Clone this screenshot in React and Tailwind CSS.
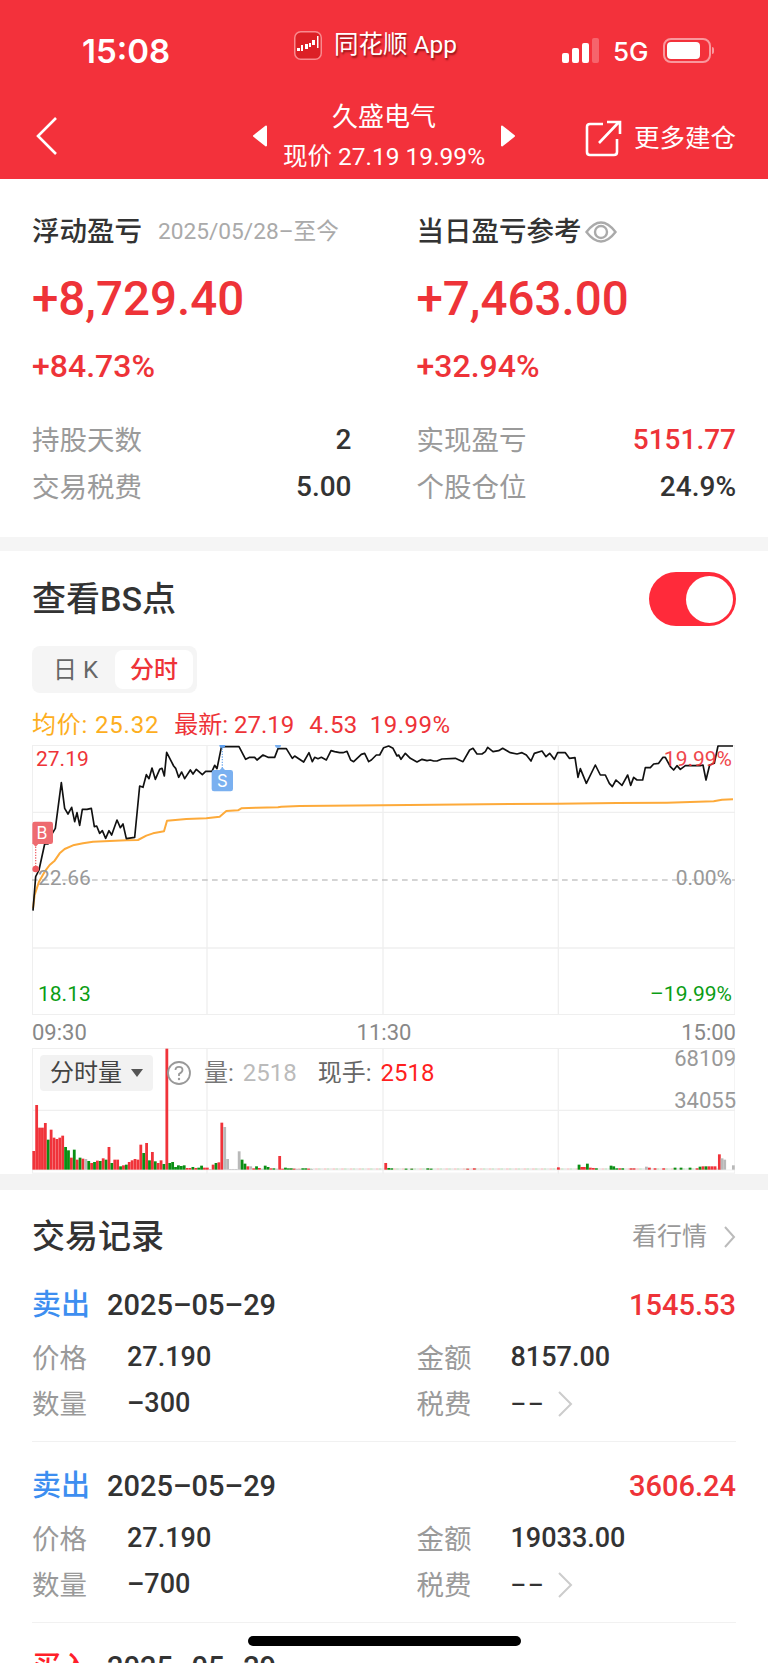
import React from 'react';

const RED = 'text-[#ee3338]';

const blackLine = '100,632 108,530 118,510 135,432 145,432 158,400 167,385 185,248 195,325 205,342 216,322 225,365 232,338 240,376 248,328 262,328 275,325 284,380 291,378 300,400 308,392 318,415 328,392 336,405 352,360 362,383 370,372 380,416 405,412 420,258 430,262 440,224 448,236 457,204 467,238 480,208 487,205 494,228 501,157 522,198 528,205 537,232 546,216 555,236 572,210 580,222 590,208 608,224 618,214 637,214 645,196 652,206 665,142 672,140 718,140 738,178 750,172 765,172 772,180 790,165 805,172 825,172 835,146 860,146 878,175 885,168 912,186 928,158 938,185 945,172 955,176 965,172 980,180 994,152 1005,155 1020,158 1030,158 1042,154 1053,180 1062,185 1085,163 1095,160 1107,185 1115,180 1130,165 1140,165 1152,143 1167,138 1180,145 1192,168 1197,165 1204,178 1217,160 1232,175 1252,186 1267,178 1282,182 1292,180 1302,183 1312,183 1327,177 1367,175 1390,185 1410,150 1420,145 1432,162 1447,162 1457,155 1464,142 1480,155 1497,152 1509,145 1532,158 1552,162 1567,158 1580,165 1594,183 1604,160 1627,153 1639,170 1650,160 1664,178 1674,158 1697,158 1709,175 1726,173 1735,232 1742,206 1760,250 1787,195 1802,225 1817,225 1829,250 1838,260 1849,240 1867,256 1884,225 1893,256 1902,232 1912,240 1929,240 1937,203 1952,203 1962,192 1977,190 1990,172 1997,172 2012,200 2022,210 2032,197 2042,208 2057,197 2102,197 2110,195 2119,240 2130,195 2144,190 2155,138 2200,138';

const goldLine = '100,625 105,585 118,545 135,515 150,495 165,482 180,460 195,447 220,436 250,430 280,425 330,423 380,421 415,420 440,407 460,400 493,394 502,362 560,357 620,355 660,350 680,333 715,331 725,325 770,323 835,322 845,320 900,318 1152,316 1452,313 1672,311 1852,309 2002,308 2142,304 2167,299 2200,298';

// r red, g green, n grey; value is the bar's top in the chart's units
const leftBars = 'r362 r224 r292 r292 r278 g328 r298 r322 r326 r322 r316 g350 g360 r382 g358 r388 g382 r385 n386 g392 r398 g395 r391 g392 r384 g388 r350 g398 r388 r388 g408 r405 g403 r395 r390 r386 r388 r343 g368 r338 g390 r365 g393 r398 r390 g401 r55 g398 g395 g410 g405 g407 g405 r413 r413 g410 r413 g412 g406 r412 r412 n416 r403 g398 r396 r277 n290 n386 n416 n416 n416 n363 g388 g400 r408 n408 r414 g408 r413 n415 g406 g410 r414 g414 n415 r377 r415 g412 g414 g414 r415 n416 n416 g414 g414 r415 n416'.split(' ');

const rightBars = [
  [1154, 'r', 398], [1163, 'g', 413], [1172, 'g', 414], [1215, 'g', 415], [1232, 'g', 415], [1280, 'g', 414], [1290, 'g', 415], [1400, 'r', 415], [1420, 'r', 414],
  [1672, 'r', 411], [1734, 'g', 403], [1742, 'r', 410], [1750, 'r', 410], [1759, 'g', 400], [1768, 'r', 412], [1777, 'r', 413], [1786, 'g', 414],
  [1830, 'g', 406], [1838, 'g', 408], [1847, 'g', 414], [1856, 'r', 414], [1865, 'g', 414], [1890, 'r', 414], [1899, 'r', 414], [1936, 'n', 409], [1945, 'r', 412], [1962, 'r', 414],
  [1988, 'r', 414], [2022, 'g', 412], [2040, 'g', 412], [2067, 'g', 412], [2088, 'r', 414], [2097, 'g', 409], [2106, 'r', 408], [2115, 'g', 408], [2124, 'r', 408], [2133, 'r', 408], [2142, 'r', 408], [2155, 'r', 372], [2163, 'n', 384], [2171, 'n', 388], [2197, 'n', 405],
];

const barFill = { r: '#f0333a', g: '#0a8f14', n: '#b9b9b9' };
const faintFill = ['#f7c4c6', '#c4e4c6', '#e4e4e4'];

function PriceChart() {
  return (
    <svg width="703.33" height="270" viewBox="97 135 2110 810" className="block">
      <rect x="98.5" y="136.5" width="2107" height="807" fill="none" stroke="#efefef" strokeWidth="3" />
      <path d="M97 337H2207M97 744H2207M622 135V945M1150 135V945M1676 135V945" stroke="#efefef" strokeWidth="4" fill="none" />
      <path d="M97 540H2207" stroke="#aaaaaa" strokeWidth="3.5" strokeDasharray="17 13" fill="none" />
      <polyline points={goldLine} fill="none" stroke="#fdaa3a" strokeWidth="6" strokeLinejoin="round" />
      <polyline points={blackLine} fill="none" stroke="#111" strokeWidth="5" strokeLinejoin="round" />
      <path d="M108 432V500" stroke="#ee6b70" strokeWidth="4" strokeDasharray="4 4" />
      <circle cx="108" cy="507" r="10" fill="#ee5a60" />
      <path d="M105 365H153Q160 365 160 372V425Q160 432 153 432H116L108 440L100 432H98V372Q98 365 105 365Z" fill="#ee6b70" />
      <text x="127" y="418" fontSize="50" fill="#fff" textAnchor="middle" fontFamily="Inter, sans-serif">B</text>
      <path d="M668 145V205" stroke="#7ab0f0" strokeWidth="4" strokeDasharray="4 4" />
      <circle cx="668" cy="135" r="9" fill="#5e9fee" />
      <circle cx="835" cy="135" r="9" fill="#7ab0f0" />
      <path d="M643 210H660L668 202L676 210H693Q700 210 700 217V267Q700 274 693 274H643Q636 274 636 267V217Q636 210 643 210Z" fill="#7ab0f0" />
      <text x="668" y="260" fontSize="50" fill="#fff" textAnchor="middle" fontFamily="Inter, sans-serif">S</text>
    </svg>
  );
}

function VolumeChart() {
  return (
    <svg width="703.33" height="125.67" viewBox="97 53 2110 377" className="block">
      <rect x="98.5" y="54.5" width="2107" height="374" fill="none" stroke="#efefef" strokeWidth="3" />
      <path d="M97 240H2207M622 53V430M1150 53V430M1676 53V430" stroke="#efefef" strokeWidth="4" fill="none" />
      <path d="M97 419H2207" stroke="#e8e8e8" strokeWidth="2" fill="none" />
      {Array.from({ length: 150 }, (_, i) => (
        <rect key={i} x={868 + i * 8.68} y="414" width="8.4" height="4" fill={faintFill[i % 3]} />
      ))}
      {leftBars.map((b, i) => {
        const top = Number(b.slice(1));
        return <rect key={i} x={98 + i * 8.68} y={top} width="8.4" height={418 - top} fill={barFill[b[0]]} />;
      })}
      {rightBars.map(([x, c, top]) => (
        <rect key={x} x={x} y={top} width="8.4" height={418 - top} fill={barFill[c]} />
      ))}
    </svg>
  );
}

function StatusBar() {
  return (
    <div className="relative h-[84px]">
      <div className="absolute left-[82px] top-[32px] text-[33px] leading-[38px] font-semibold font-['Inter',sans-serif]">15:08</div>
      <div className="absolute left-[294px] top-[30px] flex items-center gap-[12px]">
        <svg width="28" height="29" viewBox="0 0 28 29">
          <rect x="0.75" y="0.75" width="26.5" height="27.5" rx="6" fill="#dc2026" stroke="#f98a8e" strokeWidth="1.5" />
          <path d="M3 17h3v3H3zM7 14h2v6H7zM11 13h3v5h-3zM15 12h2v4h-2zM18 9h3v5h-3zM23 5h1.5v12H23z" fill="#fff" />
        </svg>
        <span className="text-[24.5px] leading-[30px] [text-shadow:1px_2px_2px_rgba(90,0,0,0.65)]">同花顺 App</span>
      </div>
      <div className="absolute left-[562px] top-[38px] flex h-[25px] items-end gap-[3px]">
        <div className="h-[10px] w-[7px] rounded-[2px] bg-white" />
        <div className="h-[15px] w-[7px] rounded-[2px] bg-white" />
        <div className="h-[20px] w-[7px] rounded-[2px] bg-white" />
        <div className="h-[25px] w-[7px] rounded-[2px] bg-white/25" />
      </div>
      <div className="absolute left-[613px] top-[35px] text-[26px] leading-[34px] font-medium font-['Inter',sans-serif]">5G</div>
      <div className="absolute left-[663px] top-[38px] flex h-[25px] w-[48px] items-center rounded-[8px] border-2 border-white/50 pl-[2px]">
        <div className="h-[17px] w-[33px] rounded-[4px] bg-white" />
      </div>
      <div className="absolute left-[712px] top-[47px] h-[7px] w-[2px] rounded-r bg-white/50" />
    </div>
  );
}

function NavBar() {
  return (
    <div className="grid h-[95px] grid-cols-[1fr_auto_1fr] items-center px-[32px] pt-[10px]">
      <svg width="24" height="40" viewBox="0 0 24 40" className="ml-[3px] -mt-[2px]">
        <path d="M21 2L3 20L21 38" fill="none" stroke="#fff" strokeWidth="2.6" />
      </svg>
      <div className="flex items-center gap-[15px]">
        <svg width="16" height="22" viewBox="0 0 16 22" className="mt-[-1px]"><path d="M14 1.5L2 11L14 20.5Z" fill="#fff" stroke="#fff" strokeWidth="2" strokeLinejoin="round" /></svg>
        <div className="flex flex-col items-center">
          <div className="h-[40px] text-[26px] leading-[40px]">久盛电气</div>
          <div className="mt-[1px] h-[38px] text-[24.5px] leading-[38px]">现价 27.19 19.99%</div>
        </div>
        <svg width="16" height="22" viewBox="0 0 16 22" className="mt-[-1px]"><path d="M2 1.5L14 11L2 20.5Z" fill="#fff" stroke="#fff" strokeWidth="2" strokeLinejoin="round" /></svg>
      </div>
      <div className="flex items-center justify-end gap-[12px] pt-[3px]">
        <svg width="37" height="37" viewBox="0 0 37 37">
          <path d="M18 4H5Q2 4 2 7V32Q2 35 5 35H29Q32 35 32 32V19" fill="none" stroke="#fff" strokeWidth="2.6" />
          <path d="M14 23L34 2M22 2H35V14" fill="none" stroke="#fff" strokeWidth="2.6" />
        </svg>
        <span className="text-[25.5px] leading-[36px]">更多建仓</span>
      </div>
    </div>
  );
}

function Stat({ label, value, valueClass = 'text-[#333]' }) {
  return (
    <div className="flex h-[47px] items-center justify-between">
      <span className="pt-[2px] text-[27.5px] text-[#9a9a9a]">{label}</span>
      <span className={`text-[28px] font-medium ${valueClass}`}>{value}</span>
    </div>
  );
}

function Summary() {
  return (
    <div className="h-[358px] px-[32px] pt-[33px]">
      <div className="grid grid-cols-2 gap-x-[65px]">
        <div className="flex h-[40px] items-center">
          <span className="text-[27.5px] font-medium text-[#333]">浮动盈亏</span>
          <span className="ml-[16px] text-[22.7px] text-[#aaa]">2025/05/28–至今</span>
        </div>
        <div className="flex h-[40px] items-center">
          <span className="text-[27.5px] font-medium text-[#333]">当日盈亏参考</span>
          <svg width="32" height="26" viewBox="0 0 32 26" className="ml-[3px]">
            <path d="M1.5 13Q16 -6 30.5 13Q16 32 1.5 13Z" fill="none" stroke="#aaa" strokeWidth="2.4" />
            <circle cx="16" cy="13" r="6" fill="none" stroke="#aaa" strokeWidth="2.4" />
          </svg>
        </div>
        <div className={`mt-[17px] h-[60px] text-[47.5px] leading-[60px] font-medium ${RED}`}>+8,729.40</div>
        <div className={`mt-[17px] h-[60px] text-[47.5px] leading-[60px] font-medium ${RED}`}>+7,463.00</div>
        <div className={`mt-[17px] h-[40px] text-[32px] leading-[40px] font-medium ${RED}`}>+84.73%</div>
        <div className={`mt-[17px] h-[40px] text-[32px] leading-[40px] font-medium ${RED}`}>+32.94%</div>
      </div>
      <div className="mt-[30px] grid grid-cols-2 gap-x-[65px]">
        <Stat label="持股天数" value="2" />
        <Stat label="实现盈亏" value="5151.77" valueClass={RED} />
        <Stat label="交易税费" value="5.00" />
        <Stat label="个股仓位" value="24.9%" />
      </div>
    </div>
  );
}

function BsSection() {
  return (
    <div className="px-[32px] pt-[21px]">
      <div className="flex h-[54px] items-center justify-between">
        <span className="text-[34px] text-[#333] font-medium">查看BS点</span>
        <div className="flex h-[54px] w-[87px] items-center justify-end rounded-full bg-[#ff2a3a] pr-[3px]">
          <div className="h-[47px] w-[47px] rounded-full bg-white" />
        </div>
      </div>
      <div className="mt-[20px] flex h-[47px] w-[165px] items-center rounded-[8px] bg-[#f5f5f5] pl-[4px]">
        <span className="w-[79px] text-center text-[24px] text-[#666]">日 K</span>
        <span className={`flex h-[39px] w-[78px] items-center justify-center rounded-[8px] bg-white text-[24px] font-medium ${RED}`}>分时</span>
      </div>
      <div className="mt-[17px] flex h-[30px] items-center text-[24px]">
        <span className="tracking-[0.8px] text-[#fdae1e]">均价: 25.32</span>
        <span className={`ml-[15px] ${RED}`}>最新: 27.19</span>
        <span className={`ml-[15px] tracking-[0.4px] ${RED}`}>4.53</span>
        <span className={`ml-[12px] tracking-[0.5px] ${RED}`}>19.99%</span>
      </div>
      <div className="relative mt-[5px] w-[704px] text-[21px] leading-[26px]">
        <PriceChart />
        <span className={`absolute left-[4px] top-[1px] ${RED}`}>27.19</span>
        <span className={`absolute right-[4px] top-[1px] ${RED} opacity-90`}>19.99%</span>
        <span className="absolute left-[6px] top-[120px] text-[#999]">22.66</span>
        <span className="absolute right-[4px] top-[120px] text-[#999]">0.00%</span>
        <span className="absolute left-[6px] top-[236px] text-[#0a9d14]">18.13</span>
        <span className="absolute right-[4px] top-[236px] text-[#0a9d14]">–19.99%</span>
      </div>
      <div className="flex h-[32px] w-[704px] items-center justify-between pt-[3px] text-[22px] text-[#888]">
        <span>09:30</span>
        <span>11:30</span>
        <span>15:00</span>
      </div>
      <div className="relative mt-[1px] w-[704px]">
        <VolumeChart />
        <div className="absolute left-[8px] top-[7px] flex h-[36px] w-[113px] items-center justify-center gap-[9px] rounded-[4px] bg-[#f2f2f2] text-[24px] text-[#444]">
          分时量
          <svg width="12" height="8" viewBox="0 0 12 8"><path d="M0 0H12L6 8Z" fill="#555" /></svg>
        </div>
        <svg width="26" height="26" viewBox="0 0 26 26" className="absolute left-[134px] top-[12px]">
          <circle cx="13" cy="13" r="11" fill="none" stroke="#999" strokeWidth="1.8" />
          <path d="M9.5 10Q9.5 6.8 13 6.8Q16.5 6.8 16.5 10Q16.5 12 13 14V16" fill="none" stroke="#999" strokeWidth="1.8" />
          <circle cx="13" cy="19" r="1.2" fill="#999" />
        </svg>
        <div className="absolute left-[172px] top-[10px] flex h-[30px] items-center text-[24px]">
          <span className="text-[#777]">量:</span>
          <span className="ml-[9px] text-[#bbb]">2518</span>
          <span className="ml-[21px] text-[#666]">现手:</span>
          <span className="ml-[9px] text-[#ff1f1f]">2518</span>
        </div>
        <span className="absolute right-0 top-0 text-[22px] leading-[22px] text-[#999]">68109</span>
        <span className="absolute right-0 top-[42px] text-[22px] leading-[22px] text-[#999]">34055</span>
      </div>
    </div>
  );
}

function Trade({ side, sideClass, amount, price, total, qty }) {
  return (
    <div className="border-b border-[#f1f1f1] pt-[25px] pb-[14px]">
      <div className="flex h-[40px] items-center justify-between">
        <div className="flex items-center">
          <span className={`w-[75px] text-[29px] font-medium ${sideClass}`}>{side}</span>
          <span className="text-[29px] font-medium text-[#333]">2025–05–29</span>
        </div>
        <span className={`text-[29px] font-medium ${RED}`}>{amount}</span>
      </div>
      <div className="mt-[9px] grid grid-cols-2 gap-x-[65px]">
        <div className="flex h-[46px] items-center">
          <span className="w-[95px] pt-[2px] text-[27.5px] text-[#9a9a9a]">价格</span>
          <span className="text-[27px] font-medium text-[#333]">{price}</span>
        </div>
        <div className="flex h-[46px] items-center">
          <span className="w-[94px] pt-[2px] text-[27.5px] text-[#9a9a9a]">金额</span>
          <span className="text-[27px] font-medium text-[#333]">{total}</span>
        </div>
        <div className="flex h-[46px] items-center">
          <span className="w-[95px] pt-[2px] text-[27.5px] text-[#9a9a9a]">数量</span>
          <span className="text-[27px] font-medium text-[#333]">{qty}</span>
        </div>
        <div className="flex h-[46px] items-center">
          <span className="w-[94px] pt-[2px] text-[27.5px] text-[#9a9a9a]">税费</span>
          <span className="w-[46px] text-[24px] font-medium tracking-[2px] text-[#333]">––</span>
          <svg width="16" height="26" viewBox="0 0 16 26"><path d="M2 1L14 13L2 25" fill="none" stroke="#ccc" strokeWidth="2" /></svg>
        </div>
      </div>
    </div>
  );
}

function Records() {
  return (
    <div className="px-[32px] pt-[24px]">
      <div className="flex h-[47px] items-center justify-between">
        <span className="text-[33px] font-medium text-[#333]">交易记录</span>
        <div className="flex items-center gap-[16px]">
          <span className="text-[25px] text-[#999]">看行情</span>
          <svg width="13" height="24" viewBox="0 0 13 24"><path d="M2 2L11 12L2 22" fill="none" stroke="#bbb" strokeWidth="2" /></svg>
        </div>
      </div>
      <Trade side="卖出" sideClass="text-[#3d8ef0]" amount="1545.53" price="27.190" total="8157.00" qty="–300" />
      <Trade side="卖出" sideClass="text-[#3d8ef0]" amount="3606.24" price="27.190" total="19033.00" qty="–700" />
      <div className="mt-[25px] flex h-[40px] items-center">
        <span className="w-[75px] text-[29px] font-medium text-[#ff1f2a]">买入</span>
        <span className="text-[29px] font-medium text-[#333]">2025–05–29</span>
      </div>
    </div>
  );
}

export default function App() {
  return (
    <div className="relative h-[1663px] w-[768px] overflow-hidden bg-white font-['Roboto','Noto_Sans_CJK_SC',sans-serif]">
      <div className="h-[179px] bg-[#f3313b] text-white">
        <StatusBar />
        <NavBar />
      </div>
      <Summary />
      <div className="h-[14px] bg-[#f5f5f5]" />
      <BsSection />
      <div className="h-[16px] bg-[#f3f3f3]" />
      <Records />
      <div className="absolute bottom-[17px] left-[248px] h-[10px] w-[273px] rounded-full bg-black" />
    </div>
  );
}
